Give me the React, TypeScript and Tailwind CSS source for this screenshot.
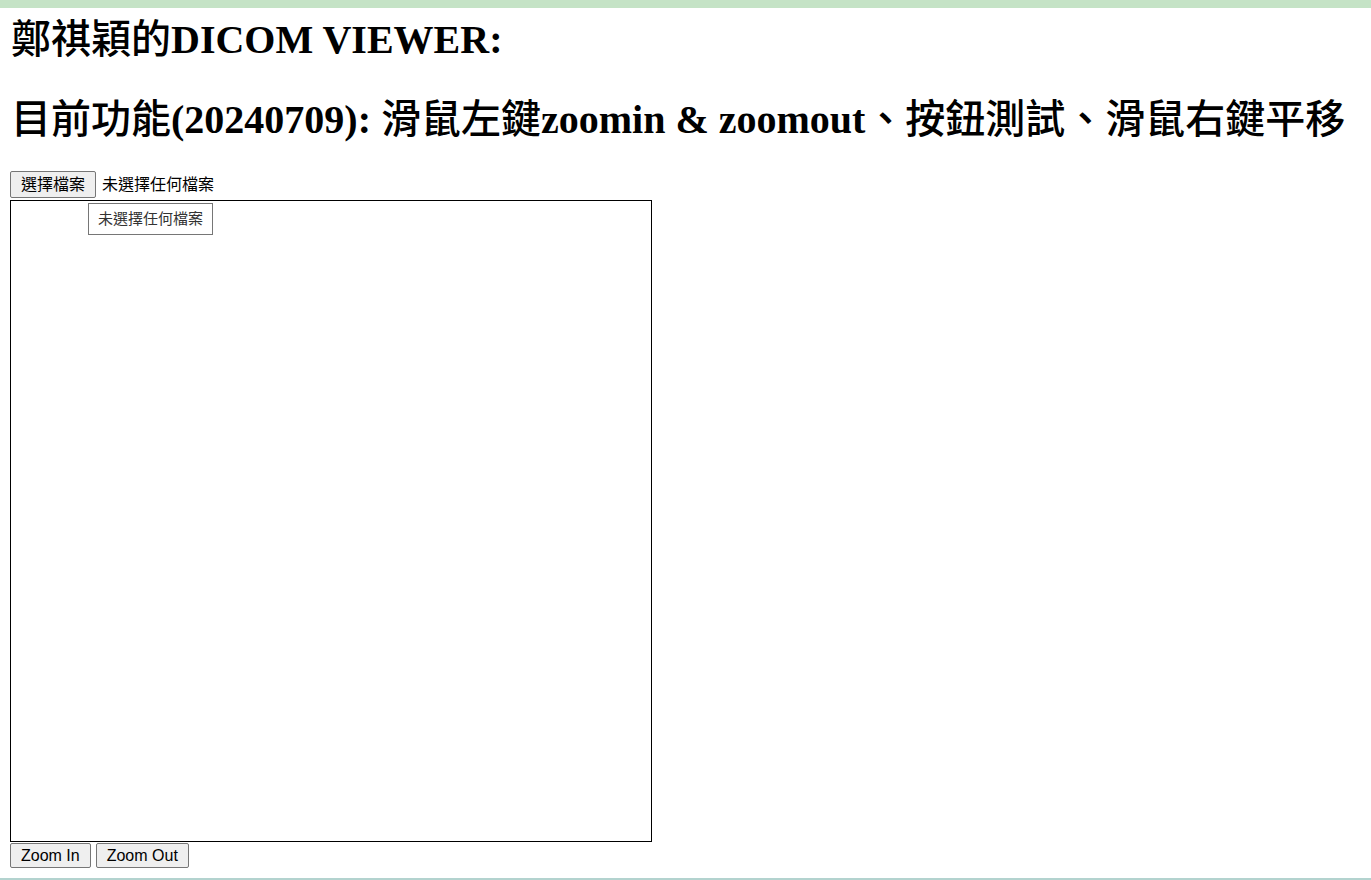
import React from 'react';

const serif = { fontFamily: '"Liberation Serif", "Noto Sans CJK TC", serif' };

// CJK glyphs in the reference are a lighter weight than the bold serif latin
const Cjk = ({ children }: { children: React.ReactNode }) => (
  <span className="font-medium">{children}</span>
);

export default function App() {
  return (
    <div className="min-h-[880px] flex flex-col bg-white text-black">
      <div className="h-[8px] bg-[#c5e3c6]" />

      <div className="flex-1 px-[10px]">
        <h1
          className="text-[40px] font-bold leading-[48px] mt-[8px] ml-[1px]"
          style={serif}
        >
          <Cjk>鄭祺穎的</Cjk>DICOM VIEWER:
        </h1>
        <h1
          className="text-[40px] font-bold leading-[48px] mt-[32px] ml-[1px] whitespace-nowrap"
          style={serif}
        >
          <Cjk>目前功能</Cjk>(20240709): <Cjk>滑鼠左鍵</Cjk>zoomin &amp; zoomout
          <Cjk>、按鈕測試、滑鼠右鍵平移</Cjk>
        </h1>

        {/* file picker */}
        <div
          className="relative mt-[27px] flex items-center gap-[6px] text-[16px] leading-[20px]"
          style={{ fontFamily: '"Liberation Sans", "Noto Sans CJK TC", sans-serif' }}
        >
          <button className="h-[27px] px-[10px] bg-[#efefef] border border-[#767676] rounded-[2px] text-[16px] leading-[20px]">
            選擇檔案
          </button>
          <span>未選擇任何檔案</span>
          <div className="absolute left-[78px] top-[32px] z-10 h-[32px] px-[9px] flex items-center bg-white border border-[#767676] text-[15px] text-[#333]">
            未選擇任何檔案
          </div>
        </div>

        {/* viewer canvas */}
        <div className="mt-[2px] w-[642px] h-[642px] border border-black" />

        <div
          className="mt-[1px] flex gap-[5px] text-[16px]"
          style={{ fontFamily: '"Liberation Sans", Arial, sans-serif' }}
        >
          <button className="h-[25px] px-[10px] bg-[#efefef] border border-[#767676] rounded-[2px] leading-[20px]">
            Zoom In
          </button>
          <button className="h-[25px] px-[10px] bg-[#efefef] border border-[#767676] rounded-[2px] leading-[20px]">
            Zoom Out
          </button>
        </div>
      </div>

      <div className="h-[2px] bg-[#b3d3cf]" />
    </div>
  );
}
